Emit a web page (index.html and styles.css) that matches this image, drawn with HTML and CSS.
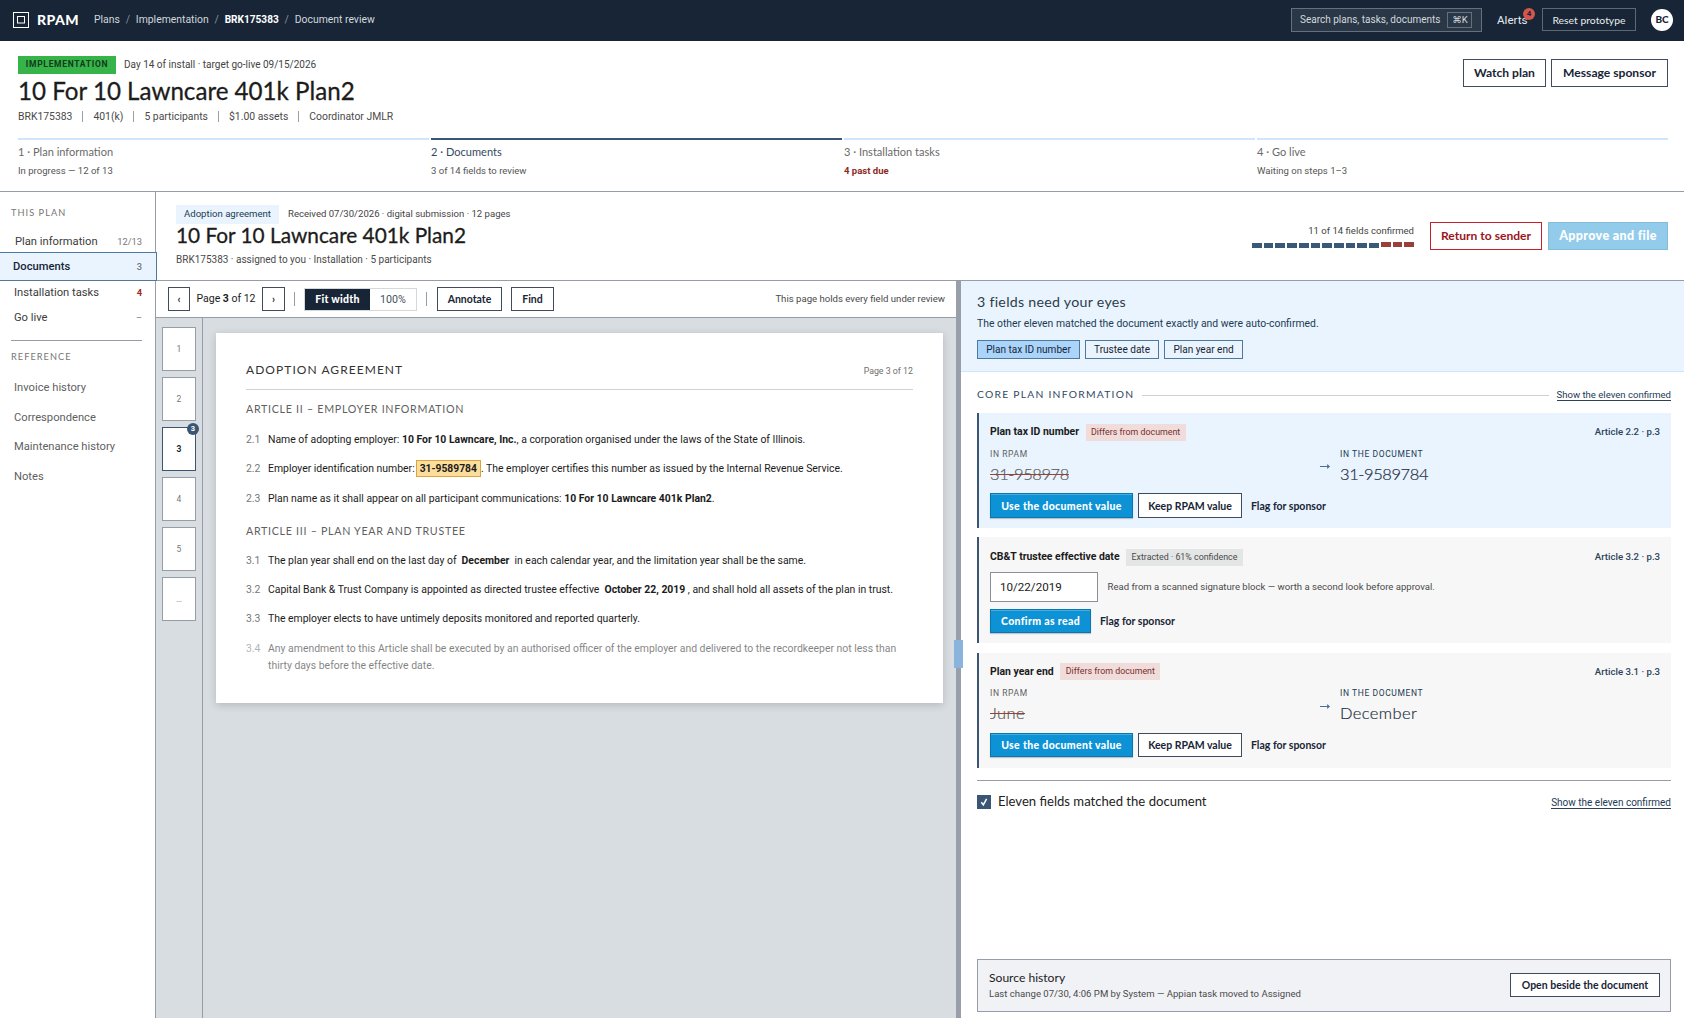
FILE: index.html
```html
<!DOCTYPE html>
<html lang="en">
<head>
<meta charset="utf-8">
<title>RPAM – Document review</title>
<link rel="stylesheet" href="styles.css">
</head>
<body>
<header class="topbar">
  <svg class="logo" width="17" height="17" viewBox="0 0 17 17" fill="none" stroke="#fff"><rect x=".5" y=".5" width="15" height="15"/><rect x="4.5" y="4.5" width="7" height="6.5"/></svg>
  <span class="brand">RPAM</span>
  <nav class="crumbs"><span>Plans</span><i>/</i><span>Implementation</span><i>/</i><b>BRK175383</b><i>/</i><span>Document review</span></nav>
  <div class="search"><span>Search plans, tasks, documents</span><kbd>⌘K</kbd></div>
  <div class="alerts">Alerts<span class="alert-count">4</span></div>
  <button class="reset">Reset prototype</button>
  <div class="avatar">BC</div>
</header>

<section class="plan">
  <div class="plan-top">
    <div class="plan-id">
      <div class="plan-status"><span class="stage">IMPLEMENTATION</span><span class="day">Day 14 of install · target go-live 09/15/2026</span></div>
      <h1>10 For 10 Lawncare 401k Plan2</h1>
      <ul class="meta"><li>BRK175383</li><li>401(k)</li><li>5 participants</li><li>$1.00 assets</li><li>Coordinator JMLR</li></ul>
    </div>
    <div class="plan-actions"><button class="btn watch">Watch plan</button><button class="btn message">Message sponsor</button></div>
  </div>
  <ol class="steps">
    <li><span class="step-name">1 · Plan information</span><span class="step-note">In progress — 12 of 13</span></li>
    <li class="current"><span class="step-name">2 · Documents</span><span class="step-note">3 of 14 fields to review</span></li>
    <li><span class="step-name">3 · Installation tasks</span><span class="step-note late">4 past due</span></li>
    <li><span class="step-name">4 · Go live</span><span class="step-note">Waiting on steps 1–3</span></li>
  </ol>
</section>

<div class="body">
  <aside class="sidebar">
    <h2>THIS PLAN</h2>
    <a class="nav first"><span>Plan information</span><em>12/13</em></a>
    <a class="nav active"><span>Documents</span><em>3</em></a>
    <a class="nav"><span>Installation tasks</span><em class="late">4</em></a>
    <a class="nav last"><span>Go live</span><em>–</em></a>
    <hr>
    <h2 class="ref-head">REFERENCE</h2>
    <a class="ref">Invoice history</a>
    <a class="ref">Correspondence</a>
    <a class="ref">Maintenance history</a>
    <a class="ref">Notes</a>
  </aside>

  <main class="main">
    <section class="doc-head">
      <div class="doc-id">
        <div class="doc-tags"><span class="doc-type">Adoption agreement</span><span class="received">Received 07/30/2026 · digital submission · 12 pages</span></div>
        <h2>10 For 10 Lawncare 401k Plan2</h2>
        <p>BRK175383 · assigned to you · Installation · 5 participants</p>
      </div>
      <div class="progress">
        <span>11 of 14 fields confirmed</span>
        <div class="segs"><i></i><i></i><i></i><i></i><i></i><i></i><i></i><i></i><i></i><i></i><i></i><i class="open"></i><i class="open"></i><i class="open"></i></div>
      </div>
      <button class="btn return">Return to sender</button>
      <button class="btn approve">Approve and file</button>
    </section>

    <div class="split">
      <section class="viewer">
        <div class="toolbar">
          <button class="btn sm arrow-l">‹</button>
          <span class="pageno">Page <b>3</b> of 12</span>
          <button class="btn sm arrow-r">›</button>
          <i class="sep"></i>
          <div class="fit"><span class="on">Fit width</span><span class="off">100%</span></div>
          <i class="sep"></i>
          <button class="btn sm annotate">Annotate</button>
          <button class="btn sm find">Find</button>
          <span class="holds">This page holds every field under review</span>
        </div>
        <div class="canvas">
          <div class="thumbs">
            <div>1</div><div>2</div><div class="sel">3<span>3</span></div><div>4</div><div>5</div><div>…</div>
          </div>
          <article class="paper">
            <header><h3>ADOPTION AGREEMENT</h3><span>Page 3 of 12</span></header>
            <h4 class="art2">ARTICLE II – EMPLOYER INFORMATION</h4>
            <div class="clause"><i>2.1</i><p>Name of adopting employer: <b>10 For 10 Lawncare, Inc.</b>, a corporation organised under the laws of the State of Illinois.</p></div>
            <div class="clause"><i>2.2</i><p>Employer identification number:<mark>31-9589784</mark>. The employer certifies this number as issued by the Internal Revenue Service.</p></div>
            <div class="clause"><i>2.3</i><p>Plan name as it shall appear on all participant communications: <b>10 For 10 Lawncare 401k Plan2</b>.</p></div>
            <h4 class="art3">ARTICLE III – PLAN YEAR AND TRUSTEE</h4>
            <div class="clause"><i>3.1</i><p>The plan year shall end on the last day of <b class="field">December</b> in each calendar year, and the limitation year shall be the same.</p></div>
            <div class="clause"><i>3.2</i><p>Capital Bank &amp; Trust Company is appointed as directed trustee effective <b class="field">October 22, 2019</b>, and shall hold all assets of the plan in trust.</p></div>
            <div class="clause"><i>3.3</i><p>The employer elects to have untimely deposits monitored and reported quarterly.</p></div>
            <div class="clause faded"><i>3.4</i><p>Any amendment to this Article shall be executed by an authorised officer of the employer and delivered to the recordkeeper not less than<br>thirty days before the effective date.</p></div>
          </article>
        </div>
      </section>

      <div class="splitter"><span></span></div>

      <section class="review">
        <div class="banner">
          <h3>3 fields need your eyes</h3>
          <p>The other eleven matched the document exactly and were auto-confirmed.</p>
          <div class="chips"><span class="chip c1 on">Plan tax ID number</span><span class="chip c2">Trustee date</span><span class="chip c3">Plan year end</span></div>
        </div>
        <div class="fields">
          <div class="group"><h4>CORE PLAN INFORMATION</h4><i></i><a class="show">Show the eleven confirmed</a></div>

          <div class="card active">
            <div class="card-head"><b>Plan tax ID number</b><span class="pill">Differs from document</span><em>Article 2.2 · p.3</em></div>
            <div class="compare">
              <div class="old"><small>IN RPAM</small><s class="num">31-958978</s></div>
              <svg width="11" height="9" viewBox="0 0 11 9" fill="none" stroke="#4a6f98"><path d="M0 4.5h9"/><path d="M7.2 2 10 4.5 7.2 7Z" fill="#4a6f98" stroke="none"/></svg>
              <div class="new"><small>IN THE DOCUMENT</small><span class="num">31-9589784</span></div>
            </div>
            <div class="acts"><button class="btn sm primary use">Use the document value</button><button class="btn sm keep">Keep RPAM value</button><a class="flag">Flag for sponsor</a></div>
          </div>

          <div class="card second">
            <div class="card-head"><b>CB&amp;T trustee effective date</b><span class="pill grey">Extracted · 61% confidence</span><em>Article 3.2 · p.3</em></div>
            <div class="entry"><div class="input">10/22/2019</div><span>Read from a scanned signature block — worth a second look before approval.</span></div>
            <div class="acts"><button class="btn sm primary confirm">Confirm as read</button><a class="flag">Flag for sponsor</a></div>
          </div>

          <div class="card third">
            <div class="card-head"><b>Plan year end</b><span class="pill">Differs from document</span><em>Article 3.1 · p.3</em></div>
            <div class="compare">
              <div class="old"><small>IN RPAM</small><s>June</s></div>
              <svg width="11" height="9" viewBox="0 0 11 9" fill="none" stroke="#4a6f98"><path d="M0 4.5h9"/><path d="M7.2 2 10 4.5 7.2 7Z" fill="#4a6f98" stroke="none"/></svg>
              <div class="new"><small>IN THE DOCUMENT</small><span>December</span></div>
            </div>
            <div class="acts"><button class="btn sm primary use">Use the document value</button><button class="btn sm keep">Keep RPAM value</button><a class="flag">Flag for sponsor</a></div>
          </div>

          <div class="matched">
            <svg width="14" height="14" viewBox="0 0 14 14"><rect width="14" height="14" fill="#3a5674"/><path d="M4.3 7.3 6.3 9.8 9.6 3.8" fill="none" stroke="#fff" stroke-width="1.5"/></svg>
            <span>Eleven fields matched the document</span>
            <a class="show big">Show the eleven confirmed</a>
          </div>

          <div class="source">
            <div><h5>Source history</h5><p>Last change 07/30, 4:06 PM by System — Appian task moved to Assigned</p></div>
            <button class="btn sm open">Open beside the document</button>
          </div>
        </div>
      </section>
    </div>
  </main>
</div>
</body>
</html>
```
FILE: styles.css
```css
* { box-sizing: border-box; margin: 0; padding: 0; }
body { width: 1684px; height: 1018px; overflow: hidden; display: flex; flex-direction: column; background: #fff; color: #1b1b1b; font: 10.5px/14px Roboto, sans-serif; white-space: nowrap; }
ul, ol { list-style: none; }
i, em { font-style: normal; }
h1, h2, h3, h4, h5 { font-family: Lato, sans-serif; font-weight: 400; }
button { font: inherit; }

.topbar { height: 41px; background: #172536; display: flex; align-items: center; padding: 0 11px 2px 13px; color: #d3d8dd; flex: none; }
.logo { margin-top: 1px; }
.brand { font: 900 14px/20px Lato, sans-serif; letter-spacing: .4px; color: #fff; margin-left: 7px; width: 57px; }
.crumbs { display: flex; font-size: 10.4px; }
.crumbs i { width: 16px; text-align: center; color: #8a939d; }
.crumbs b { color: #fff; font-size: 10.1px; }
.search { margin-left: auto; width: 191px; height: 24px; margin-top: 1px; border: 1px solid #64707d; background: #293747; display: flex; align-items: center; padding-left: 8px; font-size: 10px; }
.search kbd { margin-left: 7px; width: 25px; height: 16px; border: 1px solid #64707d; font: 9.5px/14px Roboto, "DejaVu Sans", sans-serif; text-align: center; }
.alerts { position: relative; margin-left: 15px; width: 45px; font-size: 11.6px; color: #e8ebee; }
.alert-count { position: absolute; left: 26px; top: -5px; width: 12px; height: 12px; border-radius: 6px; background: #d4554e; color: #172536; font: 700 8px/12px Roboto, sans-serif; text-align: center; }
.reset { width: 94px; height: 23px; background: none; border: 1px solid #5d6875; color: #e8ebee; font: 10.4px/20px Lato, sans-serif; }
.avatar { margin: 1px 0 0 15px; width: 22px; height: 22px; border-radius: 11px; background: #fff; color: #172536; font: 900 10px/20px Lato, sans-serif; text-align: center; }

.btn { height: 28px; background: #fff; border: 1px solid #3d4c5e; color: #172536; font: 700 12.1px/24px Lato, sans-serif; text-align: center; white-space: nowrap; flex: none; }
.btn.sm { height: 24px; font-size: 10.5px; line-height: 20px; }
.btn.primary { background: #0d92d5; border-color: #0b76ad; box-shadow: inset 0 1px #45ade0, 0 1px 1px #0003; color: #fff; font-weight: 900; letter-spacing: .34px; }

.plan { height: 151px; border-bottom: 1px solid #969da7; padding: 0 16px 0 18px; flex: none; }
.plan-top { display: flex; justify-content: space-between; height: 97px; padding-top: 15px; }
.plan-status { display: flex; height: 18px; }
.stage { width: 98px; background: #36b449; color: #14391e; font: 700 8.5px/16px Roboto, sans-serif; letter-spacing: .7px; text-align: center; margin-right: 8px; }
.day { font-size: 10px; line-height: 17px; color: #444; }
h1 { font-size: 24.15px; line-height: 34px; color: #1c1c1c; -webkit-text-stroke: .3px #1c1c1c; }
.meta { display: flex; margin-top: 2px; font-size: 10.4px; color: #4a4a4a; }
.meta li + li::before { content: ""; display: inline-block; width: 1px; height: 11px; background: #9aa0a6; margin: 0 10px; vertical-align: -2px; }
.plan-actions { display: flex; gap: 5px; padding-top: 3px; }
.watch { width: 83px; }
.message { width: 117px; }
.steps { display: flex; gap: 2px; }
.steps li { flex: 1; border-top: 2px solid #cfe5fb; padding-top: 5px; display: flex; flex-direction: column; }
.steps .current { border-color: #3a5674; }
.step-name { font: 11.05px/14px Lato, sans-serif; color: #6a6a6a; }
.current .step-name { color: #33495f; }
.step-note { font-size: 9.55px; line-height: 14px; margin-top: 5px; color: #555; }
.step-note.late { color: #8c2a26; font-weight: 700; }

.body { flex: 1; display: flex; min-height: 0; }
.sidebar { width: 156px; border-right: 1px solid #969da7; padding-top: 14px; flex: none; }
.sidebar h2 { font: 9.2px/14px Lato, sans-serif; letter-spacing: 1.05px; color: #767676; padding-left: 11px; }
.nav { display: flex; justify-content: space-between; height: 25px; line-height: 25px; padding: 0 13px 0 14px; font-size: 11.2px; color: #3c3c3c; }
.nav em { font-size: 9.3px; color: #777; }
.nav em.late { color: #9c2a22; font-weight: 700; }
.nav.first { margin-top: 9px; padding-left: 15px; height: 23px; }
.nav.active { position: relative; width: 157px; height: 29px; line-height: 27px; border: 1px solid #4f789f; border-left: 0; background: #e9f4fe; color: #172536; font-weight: 500; padding-left: 13px; padding-right: 14px; }
.nav.last { height: 26px; line-height: 23px; }
.nav.active + .nav { height: 25px; line-height: 23px; }
.sidebar hr { border: 0; height: 1px; background: #969da7; margin: 8px 13px 0 11px; }
.sidebar .ref-head { margin-top: 9px; margin-bottom: 9px; }
.ref { display: block; height: 29.7px; line-height: 29.7px; padding-left: 14px; font-size: 11.2px; color: #5f5f5f; }

.main { flex: 1; display: flex; flex-direction: column; min-width: 0; }
.doc-head { height: 89px; border-bottom: 1px solid #969da7; display: flex; padding: 13px 16px 0 20px; flex: none; }
.doc-id { flex: 1; }
.doc-tags { display: flex; height: 19px; }
.doc-type { width: 103px; background: #e9f4fe; color: #223b55; font-size: 9.6px; line-height: 18px; text-align: center; margin-right: 9px; }
.received { font-size: 9.55px; line-height: 18px; color: #444; }
.doc-head h2 { font-size: 20.8px; line-height: 24px; margin-top: -1px; color: #1c1c1c; -webkit-text-stroke: .3px #1c1c1c; }
.doc-head p { font-size: 10px; line-height: 14px; margin-top: 6px; color: #4a4a4a; }
.progress { width: 162px; padding-top: 19px; margin-right: 16px; text-align: right; font-size: 9.55px; color: #444; }
.segs { display: flex; gap: 2px; margin-top: 5px; }
.segs i { flex: 1; height: 5px; background: #3a5878; }
.segs .open { background: #9a403b; }
.doc-head .btn { margin-top: 17px; height: 28px; }
.return { width: 112px; border-color: #c3202b; color: #9b1521; margin-right: 6px; }
.approve { width: 120px; background: #93cceb; border-color: #86bcd8; color: #fff; font-weight: 900; font-size: 12.5px; letter-spacing: .35px; }

.split { flex: 1; display: flex; min-height: 0; }
.viewer { width: 800px; display: flex; flex-direction: column; flex: none; }
.toolbar { height: 37px; border-bottom: 1px solid #969da7; display: flex; align-items: center; padding: 0 11px 0 12px; flex: none; }
.arrow-l { width: 22px; }
.arrow-r { width: 23px; }
.pageno { width: 72px; text-align: center; font-size: 10.5px; }
.sep { width: 1px; height: 14px; background: #969da7; margin: 0 9px; }
.fit { display: flex; height: 23px; line-height: 21px; text-align: center; border: 1px solid #d6d9dc; }
.fit .on { width: 65px; background: #172536; color: #fff; font: 900 10.5px/21px Lato, sans-serif; letter-spacing: .25px; }
.fit .off { width: 46px; color: #46525f; font-size: 10.7px; }
.annotate { width: 65px; margin: 0 9px 0 1px; }
.find { width: 43px; }
.holds { margin-left: auto; font-size: 9.6px; color: #4a4a4a; }
.canvas { flex: 1; display: flex; background: #d8dde1; }
.thumbs { width: 47px; border-right: 1px solid #969da7; padding: 9px 6px; display: flex; flex-direction: column; gap: 6px; }
.thumbs div { height: 44px; background: #fff; border: 1px solid #969da7; font-size: 8.5px; line-height: 42px; text-align: center; color: #777; }
.thumbs .sel { position: relative; border-color: #3a5674; color: #172536; font-weight: 700; }
.sel span { position: absolute; right: -4px; top: -5px; width: 12px; height: 12px; border-radius: 6px; background: #3a5674; color: #fff; font: 700 7.5px/12px Roboto, sans-serif; }
.paper { width: 727px; height: 370px; margin: 15px 0 0 13px; background: #fff; box-shadow: 0 2px 8px #0000002b; padding: 0 30px; }
.paper header { height: 57px; border-bottom: 1px solid #cfd2d4; display: flex; justify-content: space-between; padding-top: 29px; color: #6f6f6f; font-size: 8.8px; line-height: 18px; }
.paper h3 { font-size: 12px; line-height: 15px; letter-spacing: 1.05px; color: #333; }
.paper h4 { font-size: 10.7px; line-height: 14px; letter-spacing: .7px; color: #5f5f5f; }
.art2 { margin: 12px 0 15px; }
.clause { display: flex; line-height: 17px; font-size: 10.43px; margin-bottom: 12.3px; }
.clause i { width: 22px; color: #777; }
.clause + .art3 { margin: 17px 0 14px; }
.clause.faded { opacity: .55; margin-top: 13.2px; }
.clause mark { background: #fddd9b; border: 1px solid #dca43c; font-weight: 700; padding: 1px 3px; color: inherit; margin-left: 1px; font-size: 10.3px; }
.field { padding: 0 2.5px; }

.splitter { width: 5px; background: #989fa8; position: relative; flex: none; }
.splitter span { position: absolute; left: -2px; top: 359px; width: 9px; height: 28px; background: #8ab4dc; }

.review { flex: 1; display: flex; flex-direction: column; min-width: 0; }
.banner { height: 91px; background: #e9f4fe; border-bottom: 1px solid #cfe5fb; padding: 13px 16px 0; flex: none; }
.banner h3 { font-size: 14.2px; line-height: 16px; letter-spacing: .28px; color: #2c3b4b; }
.banner p { font-size: 10.4px; line-height: 14px; margin-top: 7px; color: #223b55; }
.chips { display: flex; gap: 5px; margin-top: 9px; }
.chip { height: 19px; border: 1px solid #4f789f; font-size: 10.05px; line-height: 17px; text-align: center; color: #172536; }
.chip.on { background: #abd4fb; }
.c1 { width: 103px; }
.c2 { width: 74px; }
.c3 { width: 79px; }
.fields { flex: 1; display: flex; flex-direction: column; padding: 13px 13px 6px 16px; min-height: 0; }
.group { display: flex; align-items: center; height: 28px; padding-bottom: 11px; }
.group h4 { font-size: 10.3px; line-height: 14px; letter-spacing: 1.25px; color: #33495f; }
.group i { flex: 1; height: 1px; background: #cfd2d4; margin: 4px 8px 0; }
.show { font-size: 9.55px; line-height: 11px; border-bottom: 1px solid #2c425a; color: #223b55; margin-top: 3px; }
.card { border-left: 2px solid #3a5674; background: #f7f7f7; padding: 11px 11px 0; height: 115px; flex: none; }
.card.active { background: #e9f4fe; }
.active .acts .btn { height: 25px; }
.card.second { height: 106px; margin: 9px 0 10px; }
.card.third { padding-top: 10px; }
.card-head { display: flex; height: 17px; line-height: 16px; }
.third .card-head { line-height: 17px; }
.card-head b { font-size: 10.45px; color: #1b1b1b; }
.card-head em { margin-left: auto; font-size: 9.6px; font-weight: 500; color: #2c425a; }
.pill { background: #efdcdb; color: #7c2e2b; font-size: 8.85px; padding: 0 5.5px; margin-left: 6.5px; }
.pill.grey { background: #e4e6e6; color: #4a4a4a; }
.compare { display: flex; padding-top: 7px; height: 52px; }
.third .compare { height: 53px; }
.compare > div { display: flex; flex-direction: column; }
.compare small { font-size: 8.5px; line-height: 12px; letter-spacing: .6px; color: #5f5f5f; }
.compare .old { width: 330px; color: #5a5a5a; font: 300 16.5px/20px Lato, sans-serif; }
.compare .old small, .compare .new small { font-family: Roboto, sans-serif; font-weight: 400; letter-spacing: .6px; }
.compare s, .new span { letter-spacing: .4px; -webkit-text-stroke: .2px; }
.compare s { text-decoration-color: #9a403b; text-decoration-thickness: 1px; margin-top: 4px; align-self: flex-start; }
.compare .new { margin-left: 9px; color: #1f2f40; font: 300 16.5px/20px Lato, sans-serif; }
.compare .new small { color: #223b55; }
.compare .num { letter-spacing: -.42px; }
.new span { margin-top: 4px; }
.compare svg { margin-top: 14px; }
.third svg { margin-top: 15px; }
.acts { display: flex; align-items: center; }
.use { width: 143px; margin-right: 5px; }
.keep { width: 104px; margin-right: 9px; }
.flag { font: 700 10.5px/20px Lato, sans-serif; color: #172536; }
.confirm { width: 101px; margin-right: 9px; }
.entry { display: flex; align-items: center; height: 30px; margin: 7px 0; }
.second .card-head { padding-top: 1px; height: 18px; }
.second .entry { margin-top: 6px; }
.input { width: 108px; height: 30px; border: 1px solid #8a9097; background: #fff; font-size: 11.6px; line-height: 28px; padding-left: 9px; margin-right: 9.5px; }
.entry span { font-size: 9.57px; color: #4a4a4a; }
.matched { margin-top: 12px; border-top: 1px solid #969da7; display: flex; align-items: center; height: 42px; flex: none; font: 13.1px/19px Lato, sans-serif; color: #222; }
.matched svg { margin-right: 7px; }
.matched span { padding-bottom: 1px; }
.matched .show { margin-left: auto; margin-top: 2px; font: 10px/11px Roboto, sans-serif; }
.source { margin-top: auto; height: 53px; border: 1px solid #969da7; background: #f1f2f6; display: flex; justify-content: space-between; padding: 0 10px 0 11px; align-items: center; flex: none; }
.source h5 { font-size: 12.1px; line-height: 16px; color: #222; }
.source p { font-size: 9.57px; line-height: 14px; margin-top: 1px; color: #4a4a4a; }
.open { width: 150px; margin-top: -1px; }
```
